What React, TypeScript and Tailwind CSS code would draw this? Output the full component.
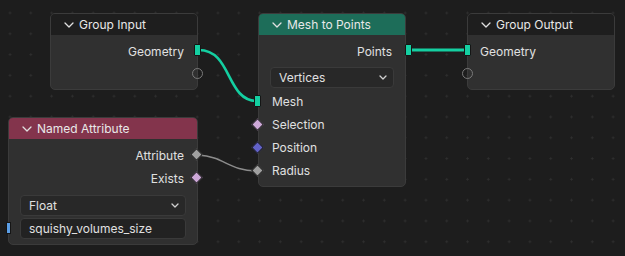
import React from "react";

const Chevron = () => (
  <svg width="10" height="6" viewBox="0 0 10 6" className="shrink-0">
    <path d="M1 1 L5 5 L9 1" fill="none" stroke="#e0e0e0" strokeWidth="1.3" strokeLinecap="round" strokeLinejoin="round" />
  </svg>
);

const SmallChevron = () => (
  <svg width="8" height="5" viewBox="0 0 8 5" className="shrink-0">
    <path d="M1 1 L4 4 L7 1" fill="none" stroke="#d0d0d0" strokeWidth="1.3" strokeLinecap="round" strokeLinejoin="round" />
  </svg>
);

const Header = ({ title, bg }: { title: string; bg: string }) => (
  <div className={`h-[21px] shrink-0 flex items-center gap-[5px] pl-[13px] pt-[1px] text-[12px] text-[#e8e8e8] ${bg}`}>
    <Chevron />
    <span className="leading-none">{title}</span>
  </div>
);

const SquareSocket = ({ color }: { color: string }) => (
  <div className={`absolute w-[7px] h-[12px] border border-[#151515] rounded-[1px] ${color}`} />
);

const Diamond = ({ color }: { color: string }) => (
  <div className={`absolute w-[9px] h-[9px] rotate-45 border border-[#1a1a1a] ${color}`} />
);

const Circle = () => (
  <div className="absolute w-[11px] h-[11px] rounded-full border-[1.5px] border-[#7a7a7a]" />
);

export default function App() {
  return (
    <div
      className="relative w-[625px] h-[256px] overflow-hidden bg-[#1d1d1d] bg-[radial-gradient(circle,#2f2f2f_0.9px,transparent_1.3px)] bg-[size:20.8px_20.8px] bg-[position:-0.4px_2.6px]"
      style={{ fontFamily: "Inter, 'Noto Sans', sans-serif" }}
    >
      {/* links */}
      <svg className="absolute inset-0" width="625" height="256">
        <path d="M199 50 C 232 50, 226 101, 257 101" fill="none" stroke="#14cfa1" strokeWidth="2.6" />
        <path d="M405 50 L 467 50" fill="none" stroke="#14cfa1" strokeWidth="2.8" />
        <path d="M198 155 C 226 157, 228 171, 258 171" fill="none" stroke="#8c8c8c" strokeWidth="1.5" />
      </svg>

      {/* Group Input */}
      <div className="absolute left-[50px] top-[13px] w-[148px] h-[77px]">
        <div className="w-full h-full flex flex-col rounded-[5px] overflow-hidden border border-[#3b3b3b] bg-[#303030]">
          <Header title="Group Input" bg="bg-[#1e1e1e]" />
          <div className="flex flex-col pt-[5px] text-[12px] text-[#e0e0e0]">
            <div className="h-[23px] flex items-center justify-end pr-[13px]">Geometry</div>
            <div className="h-[23px]" />
          </div>
        </div>
        <div className="absolute left-[144px] top-[31px]"><SquareSocket color="bg-[#14cfa1]" /></div>
        <div className="absolute left-[142px] top-[55px]"><Circle /></div>
      </div>

      {/* Mesh to Points */}
      <div className="absolute left-[258px] top-[13px] w-[148px] h-[174px]">
        <div className="w-full h-full flex flex-col rounded-[5px] overflow-hidden border border-[#3b3b3b] bg-[#303030]">
          <Header title="Mesh to Points" bg="bg-[#1d6d59]" />
          <div className="flex flex-col pt-[5px] text-[12px] text-[#e0e0e0]">
            <div className="h-[23px] flex items-center justify-end pr-[13px]">Points</div>
            <div className="mt-[4px] mx-[11px] h-[21px] flex items-center justify-between pl-[8px] pr-[6px] rounded-[4px] bg-[#282828] border border-[#3a3a3a]">
              <span>Vertices</span>
              <SmallChevron />
            </div>
            <div className="mt-[2px] h-[23px] flex items-center pl-[13px]">Mesh</div>
            <div className="h-[23px] flex items-center pl-[13px]">Selection</div>
            <div className="h-[23px] flex items-center pl-[13px]">Position</div>
            <div className="h-[23px] flex items-center pl-[13px]">Radius</div>
          </div>
        </div>
        <div className="absolute left-[147px] top-[31px]"><SquareSocket color="bg-[#14cfa1]" /></div>
        <div className="absolute left-[-4px] top-[82px]"><SquareSocket color="bg-[#14cfa1]" /></div>
        <div className="absolute left-[-5px] top-[107px]"><Diamond color="bg-[#cda8d8]" /></div>
        <div className="absolute left-[-5px] top-[130px]"><Diamond color="bg-[#6262c8]" /></div>
        <div className="absolute left-[-5px] top-[153px]"><Diamond color="bg-[#a0a0a0]" /></div>
      </div>

      {/* Group Output */}
      <div className="absolute left-[467px] top-[13px] w-[148px] h-[77px]">
        <div className="w-full h-full flex flex-col rounded-[5px] overflow-hidden border border-[#3b3b3b] bg-[#303030]">
          <Header title="Group Output" bg="bg-[#1e1e1e]" />
          <div className="flex flex-col pt-[5px] text-[12px] text-[#e0e0e0]">
            <div className="h-[23px] flex items-center pl-[12px]">Geometry</div>
            <div className="h-[23px]" />
          </div>
        </div>
        <div className="absolute left-[-3px] top-[31px]"><SquareSocket color="bg-[#14cfa1]" /></div>
        <div className="absolute left-[-5px] top-[55px]"><Circle /></div>
      </div>

      {/* Named Attribute */}
      <div className="absolute left-[8px] top-[117px] w-[190px] h-[128px]">
        <div className="w-full h-full flex flex-col rounded-[5px] overflow-hidden border border-[#3b3b3b] bg-[#303030]">
          <Header title="Named Attribute" bg="bg-[#83344c]" />
          <div className="flex flex-col pt-[5px] text-[12px] text-[#e0e0e0]">
            <div className="h-[23px] flex items-center justify-end pr-[13px]">Attribute</div>
            <div className="h-[23px] flex items-center justify-end pr-[13px]">Exists</div>
            <div className="mt-[5px] mx-[11px] h-[21px] flex items-center justify-between pl-[8px] pr-[6px] rounded-[4px] bg-[#282828] border border-[#3a3a3a]">
              <span>Float</span>
              <SmallChevron />
            </div>
            <div className="mt-[2px] mx-[11px] h-[21px] flex items-center pl-[8px] rounded-[4px] bg-[#222222] border border-[#3a3a3a]">
              <span>squishy_volumes_size</span>
            </div>
          </div>
        </div>
        <div className="absolute left-[184px] top-[33px]"><Diamond color="bg-[#a0a0a0]" /></div>
        <div className="absolute left-[184px] top-[56px]"><Diamond color="bg-[#cda8d8]" /></div>
        <div className="absolute left-[-2px] top-[105px] w-[5px] h-[12px] bg-[#5b9ee6] border border-[#151515]" />
      </div>
    </div>
  );
}
